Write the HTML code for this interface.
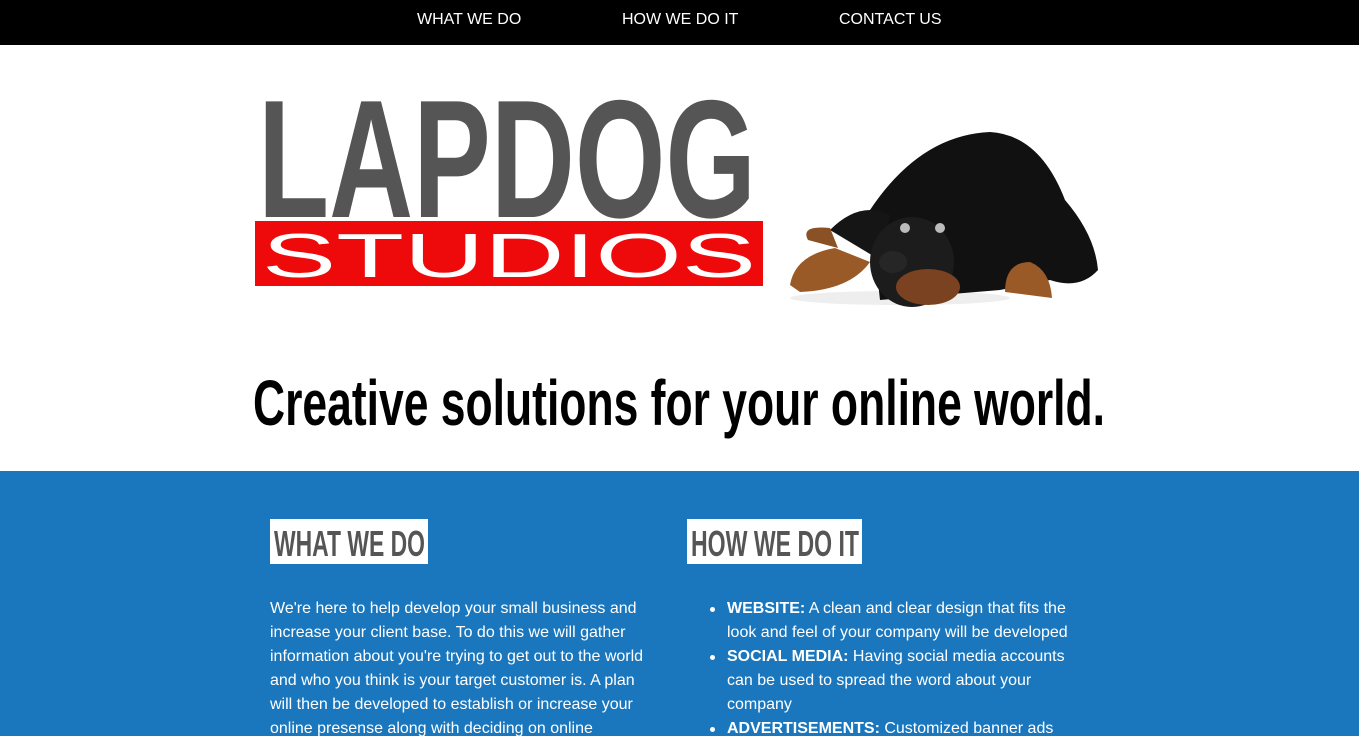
<!DOCTYPE html>
<html><head><meta charset="utf-8"><style>
*{margin:0;padding:0;box-sizing:border-box}
body{width:1359px;height:736px;overflow:hidden;background:#fff;font-family:"Liberation Sans",Arial,sans-serif;position:relative}
.nav{position:absolute;top:0;left:0;width:1359px;height:45px;background:#000}
.nav span{position:absolute;top:11px;color:#fff;font-size:16px}
.blue{position:absolute;top:471px;left:0;width:1359px;height:265px;background:#1a77bd}
.hbox{position:absolute;top:519px;height:45px;background:#fff}
.txt{position:absolute;color:#fff;font-size:16px;line-height:24px}
ul{list-style:none}
li{position:relative}
li:before{content:"";position:absolute;left:-17px;top:10px;width:5px;height:5px;border-radius:50%;background:#fff}
</style></head><body>
<div class="nav"><span style="left:417px">WHAT WE DO</span><span style="left:622px">HOW WE DO IT</span><span style="left:839px">CONTACT US</span></div>

<svg style="position:absolute;left:0;top:0" width="1359" height="471">
<text x="258" y="217" font-family="Liberation Sans" font-weight="bold" font-size="168" fill="#555" textLength="498" lengthAdjust="spacingAndGlyphs">LAPDOG</text>
<rect x="255" y="221" width="508" height="65" fill="#ee0a0a"/>
<text x="262" y="277" font-family="Liberation Sans" font-size="62" fill="#fff" textLength="494" lengthAdjust="spacingAndGlyphs">STUDIOS</text>
<ellipse cx="900" cy="298" rx="110" ry="7" fill="#eee"/>
<path d="M870 210 Q920 135 990 132 Q1040 135 1065 200 Q1095 235 1098 270 Q1080 290 1050 280 L1000 290 L880 300 Z" fill="#111"/>
<path d="M830 230 Q860 200 890 215 L880 260 Z" fill="#151515"/>
<path d="M790 285 Q795 255 835 248 L870 262 Q850 290 800 292 Z" fill="#9a5a28"/>
<path d="M808 240 Q800 225 830 228 L838 248 Z" fill="#8a5026"/>
<path d="M1005 292 Q1005 262 1030 262 Q1050 270 1052 298 Z" fill="#9a5a28"/>
<ellipse cx="912" cy="262" rx="42" ry="45" fill="#1c1c1c"/>
<ellipse cx="928" cy="287" rx="32" ry="18" fill="#7a4220"/>
<ellipse cx="893" cy="262" rx="14" ry="11" fill="#262626"/>
<circle cx="905" cy="228" r="5" fill="#bbb"/><circle cx="940" cy="228" r="5" fill="#bbb"/>
</svg>

<svg style="position:absolute;left:0;top:360" width="1359" height="90">
<text x="253" y="65" font-family="Liberation Sans Narrow,Liberation Sans" font-weight="bold" font-size="64" fill="#000" textLength="852" lengthAdjust="spacingAndGlyphs">Creative solutions for your online world.</text>
</svg>

<div class="blue"></div>
<div class="hbox" style="left:270px;width:158px"></div>
<div class="hbox" style="left:687px;width:175px"></div>
<svg style="position:absolute;left:0;top:519px" width="1359" height="45">
<text x="274" y="37" font-family="Liberation Sans Narrow,Liberation Sans" font-weight="bold" font-size="36" fill="#555" textLength="151" lengthAdjust="spacingAndGlyphs">WHAT WE DO</text>
<text x="691" y="37" font-family="Liberation Sans Narrow,Liberation Sans" font-weight="bold" font-size="36" fill="#555" textLength="168" lengthAdjust="spacingAndGlyphs">HOW WE DO IT</text>
</svg>
<div class="txt" style="left:270px;top:597px;width:385px">We're here to help develop your small business and increase your client base. To do this we will gather information about you're trying to get out to the world and who you think is your target customer is. A plan will then be developed to establish or increase your online presense along with deciding on online</div>
<ul class="txt" style="left:727px;top:597px;width:350px">
<li><b>WEBSITE:</b> A clean and clear design that fits the look and feel of your company will be developed</li>
<li><b>SOCIAL MEDIA:</b> Having social media accounts can be used to spread the word about your company</li>
<li><b>ADVERTISEMENTS:</b> Customized banner ads</li>
</ul>
</body></html>
